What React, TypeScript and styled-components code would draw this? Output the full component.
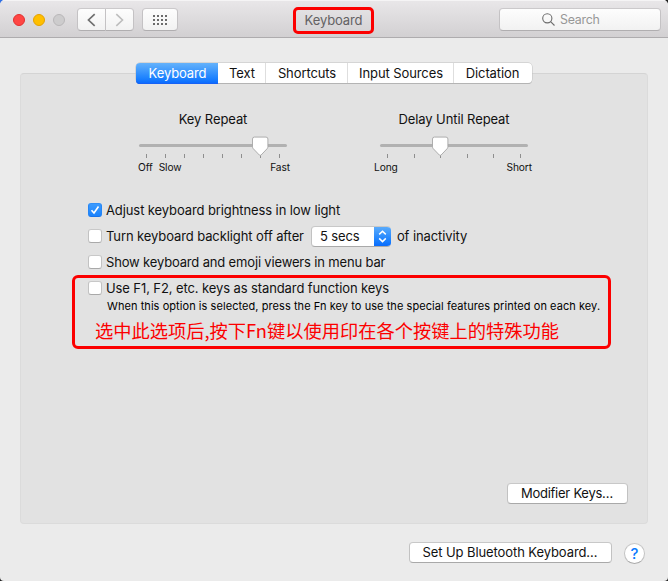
import React from "react";
import styled, { createGlobalStyle, css } from "styled-components";

const Global = createGlobalStyle`
  * { box-sizing: border-box; }
  html, body { margin: 0; padding: 0; }
  body {
    width: 668px;
    height: 581px;
    overflow: hidden;
    background: linear-gradient(135deg, #2f6fe4 0 40px, #222 40px);
    font-family: Inter, "Noto Sans CJK SC", sans-serif;
    font-size: 13px;
    line-height: 16px;
    color: #111;
    letter-spacing: -0.1px;
  }
  button { font: inherit; letter-spacing: inherit; color: inherit; }
`;

const raised = css`
  border: 1px solid;
  border-color: #c8c8c8 #c2c2c2 #a9a9a9;
  background: #fff;
`;

const Window = styled.main`
  width: 668px;
  height: 581px;
  border-radius: 5px 5px 4px 4px;
  overflow: hidden;
  background: #ebebeb;
`;

const Toolbar = styled.header`
  height: 38px;
  display: grid;
  grid-template-columns: 293px 81px 1fr;
  align-items: start;
  padding: 8px 7px 0 0;
  background: linear-gradient(#e9e7e9, #d2d0d2);
  border-bottom: 1px solid #aeacae;
  box-shadow: inset 0 1px #f5f4f5;
`;

const Controls = styled.div`
  display: flex;
  align-items: center;
  height: 23px;
  padding-left: 13px;
`;

const Light = styled.span<{ $fill: string; $edge: string }>`
  width: 12px;
  height: 12px;
  margin-right: 8px;
  border-radius: 50%;
  background: ${(p) => p.$fill};
  border: 1px solid ${(p) => p.$edge};
`;

const ToolButton = styled.button<{ $width: number; $side?: "left" | "right" }>`
  display: flex;
  align-items: center;
  justify-content: center;
  width: ${(p) => p.$width}px;
  height: 23px;
  padding: 0;
  border: 1px solid;
  border-color: #cbc9cb #c4c2c4 #b0aeb0;
  background: linear-gradient(#fdfdfd, #f2f2f2);
  border-radius: ${(p) =>
    p.$side === "left" ? "4px 0 0 4px" : p.$side === "right" ? "0 4px 4px 0" : "4px"};
  ${(p) => p.$side === "left" && "margin-left: 4px;"}
  ${(p) => p.$side === "right" && "border-left: 0; margin-right: 8px;"}
`;

const TitleMark = styled.h1`
  margin: -1px 0 0;
  width: 81px;
  height: 27px;
  border: 3px solid #fc0000;
  border-radius: 5px;
  display: flex;
  align-items: center;
  justify-content: center;
  padding-bottom: 1px;
  font-size: 13px;
  font-weight: 400;
  color: #636163;
`;

const SearchField = styled.div`
  justify-self: end;
  display: flex;
  align-items: center;
  gap: 5px;
  width: 162px;
  height: 23px;
  padding-left: 42px;
  border: 1px solid;
  border-color: #cbc9cb #c4c2c4 #b0aeb0;
  border-radius: 4px;
  background: linear-gradient(#fdfdfd, #f2f2f2);
  font-size: 12.4px;
  letter-spacing: -0.25px;
  color: #979797;
`;

const Panel = styled.section`
  display: flex;
  flex-direction: column;
  height: 451px;
  margin: 35px 20px 0;
  background: #e2e2e2;
  border: 1px solid #dbdbdb;
  border-top-color: #d4d4d4;
  border-radius: 4px;
`;

const Tabs = styled.nav`
  display: flex;
  align-self: flex-start;
  height: 20px;
  margin: -11px 0 1px 115px;
  border-radius: 4px;
  box-shadow: 0 0 0 0.5px #c0c0c0, 0 1px 0 #a9a9a9;
  background: #fff;
`;

const Tab = styled.button<{ $width: number; $active?: boolean }>`
  width: ${(p) => p.$width}px;
  height: 20px;
  padding: 0 0 0 1px;
  border: 0;
  border-right: 1px solid #dedede;
  background: transparent;
  &:last-child { border-right: 0; padding-right: 2px; }
  ${(p) =>
    p.$active &&
    css`
      height: 21px;
      padding-bottom: 1px;
      color: #fff;
      border-right: 0;
      border-radius: 4px 0 0 4px;
      background: linear-gradient(#64b2fb, #1a80ff 75%, #0867ff);
      box-shadow: inset 0 -1px #1762f5;
    `}
`;

const Sliders = styled.div`
  display: grid;
  grid-template-columns: 148px 148px;
  column-gap: 93px;
  margin: 27px 0 0 118px;
`;

const SliderBox = styled.div`
  display: flex;
  flex-direction: column;
`;

const SliderTitle = styled.div`
  text-align: center;
  white-space: nowrap;
`;

const Track = styled.div`
  position: relative;
  height: 3px;
  margin-top: 17px;
  border-radius: 2px;
  background: #b1b1b1;
`;

const Thumb = styled.svg<{ $x: number }>`
  position: absolute;
  left: ${(p) => p.$x}px;
  top: -8px;
`;

const Ticks = styled.div`
  display: flex;
  justify-content: space-between;
  height: 4px;
  margin: 7px 7px 0;
`;

const Tick = styled.i`
  width: 1px;
  height: 4px;
  background: #8e8e8e;
`;

const Labels = styled.div<{ $left: number; $right: number }>`
  display: flex;
  margin: 2px ${(p) => p.$right}px 0 ${(p) => p.$left}px;
  gap: 6px;
  font-size: 10.2px;
  line-height: 15px;
  & > :last-child { margin-left: auto; }
`;

const Options = styled.div`
  display: flex;
  flex-direction: column;
  margin: 22px 0 0 67px;
`;

const Row = styled.label<{ $tracking?: number }>`
  display: flex;
  align-items: center;
  height: 26px;
  letter-spacing: ${(p) => p.$tracking ?? -0.1}px;
  white-space: nowrap;
`;

const Box = styled.span<{ $checked?: boolean }>`
  display: flex;
  align-items: center;
  justify-content: center;
  width: 14px;
  height: 14px;
  margin-right: 4px;
  border-radius: 3px;
  ${raised}
  ${(p) => p.$checked && "background: linear-gradient(#3c9bfd, #1a82fd); border-color: #2f8ff8 #2585f5 #1873ea;"}
`;

const Popup = styled.span`
  display: flex;
  width: 80px;
  height: 21px;
  margin: 0 6px 0 7px;
  border-radius: 4px;
  overflow: hidden;
  ${raised}
  border-right: 0;
`;

const PopupValue = styled.span`
  flex: 1;
  padding-left: 8px;
  line-height: 19px;
`;

const Stepper = styled.span`
  display: flex;
  align-items: center;
  justify-content: center;
  width: 17px;
  height: 21px;
  margin-top: -1px;
  background: linear-gradient(#5eaefb, #1a80ff 70%, #0768fb);
`;

const Marked = styled.div`
  width: 539px;
  height: 74px;
  margin: 0 0 0 -16px;
  padding-left: 13px;
  border: 3px solid #fc0000;
  border-radius: 6px;
`;

const MarkedRow = styled(Row)`
  margin-top: -3px;
`;

const Hint = styled.p`
  margin: -3px 0 0 19px;
  font-size: 11px;
  line-height: 16px;
  letter-spacing: 0.063px;
  white-space: nowrap;
  color: #000;
`;

const Translation = styled.p`
  margin: 3px 0 0 7px;
  font-family: "Noto Sans CJK SC", sans-serif;
  font-size: 18.25px;
  line-height: 26px;
  letter-spacing: 0;
  white-space: nowrap;
  color: #fc0000;
`;

const PushButton = styled.button<{ $width: number; $tracking: number }>`
  width: ${(p) => p.$width}px;
  height: 21px;
  padding: 0 1px 1px 0;
  border-radius: 4px;
  letter-spacing: ${(p) => p.$tracking}px;
  white-space: nowrap;
  ${raised}
`;

const PanelFooter = styled.div`
  display: flex;
  justify-content: flex-end;
  margin: auto 19px 19px 0;
`;

const Footer = styled.footer`
  display: flex;
  justify-content: flex-end;
  align-items: flex-start;
  gap: 12px;
  padding: 18px 23px 0 0;
`;

const Help = styled.button`
  width: 21px;
  height: 21px;
  margin-top: 1px;
  padding: 0;
  border-radius: 50%;
  font-size: 15px;
  font-weight: 500;
  line-height: 18px;
  ${raised}
  color: #0a7bff;
`;

function Slider(props: {
  title: string;
  ticks: number;
  thumb: number;
  labels: string[];
  left: number;
  right: number;
}) {
  return (
    <SliderBox>
      <SliderTitle>{props.title}</SliderTitle>
      <Track>
        <Thumb $x={props.thumb} width="18" height="21" viewBox="0 0 18 21">
          <path
            d="M3.4 1.1H15Q16.9 1.1 16.9 3V10.8Q16.9 11.8 16.2 12.6L10.1 19Q9.2 19.9 8.3 19L2.2 12.6Q1.5 11.8 1.5 10.8V3Q1.5 1.1 3.4 1.1Z"
            fill="#fff"
            stroke="#a6a6a6"
            strokeWidth="0.9"
          />
        </Thumb>
      </Track>
      <Ticks>
        {Array.from({ length: props.ticks }, (_, i) => (
          <Tick key={i} />
        ))}
      </Ticks>
      <Labels $left={props.left} $right={props.right}>
        {props.labels.map((l) => (
          <span key={l}>{l}</span>
        ))}
      </Labels>
    </SliderBox>
  );
}

export default function App() {
  return (
    <>
      <Global />
      <Window>
        <Toolbar>
          <Controls>
            <Light $fill="#ff4644" $edge="#e2302f" />
            <Light $fill="#ffbf00" $edge="#e5a100" />
            <Light $fill="#cdcccd" $edge="#b9b7b9" />
            <ToolButton $width={29} $side="left" aria-label="Back">
              <svg width="9" height="14" viewBox="0 0 9 14" fill="none" stroke="#6f6f6f" strokeWidth="1.7">
                <path d="M7.7 1.2L1.5 7L7.7 12.8" />
              </svg>
            </ToolButton>
            <ToolButton $width={28} $side="right" aria-label="Forward">
              <svg width="9" height="14" viewBox="0 0 9 14" fill="none" stroke="#bdbdbd" strokeWidth="1.6">
                <path d="M1.3 1.2L7.5 7L1.3 12.8" />
              </svg>
            </ToolButton>
            <ToolButton $width={36} aria-label="Show all">
              <svg width="14" height="10" viewBox="0 0 14 10" fill="#6b6b6b">
                {[0, 4, 8].map((y) =>
                  [0, 4, 8, 12].map((x) => <rect key={`${x}-${y}`} x={x} y={y} width="2" height="2" />)
                )}
              </svg>
            </ToolButton>
          </Controls>
          <TitleMark>Keyboard</TitleMark>
          <SearchField>
            <svg width="13" height="13" viewBox="0 0 13 13" fill="none" stroke="#6c6c6c" strokeWidth="1.1">
              <circle cx="5.3" cy="5.3" r="4.6" />
              <path d="M8.6 8.6L12.5 12.5" />
            </svg>
            <span>Search</span>
          </SearchField>
        </Toolbar>

        <Panel>
          <Tabs>
            <Tab $width={82} $active>Keyboard</Tab>
            <Tab $width={48}>Text</Tab>
            <Tab $width={82}>Shortcuts</Tab>
            <Tab $width={106}>Input Sources</Tab>
            <Tab $width={78}>Dictation</Tab>
          </Tabs>

          <Sliders>
            <Slider title="Key Repeat" ticks={8} thumb={112} labels={["Off", "Slow", "Fast"]} left={-1} right={-3} />
            <Slider title="Delay Until Repeat" ticks={6} thumb={51} labels={["Long", "Short"]} left={-6} right={-4} />
          </Sliders>

          <Options>
            <Row>
              <Box $checked>
                <svg width="10" height="10" viewBox="0 0 10 10" fill="none" stroke="#fff" strokeWidth="1.6">
                  <path d="M1.5 5.2L4 8L8.5 1.5" />
                </svg>
              </Box>
              Adjust keyboard brightness in low light
            </Row>
            <Row>
              <Box />
              Turn keyboard backlight off after
              <Popup>
                <PopupValue>5 secs</PopupValue>
                <Stepper>
                  <svg width="9" height="13" viewBox="0 0 9 13" fill="none" stroke="#fff" strokeWidth="1.5">
                    <path d="M1.2 4.4L4.5 1.2L7.8 4.4M1.2 8.4L4.5 11.6L7.8 8.4" />
                  </svg>
                </Stepper>
              </Popup>
              of inactivity
            </Row>
            <Row $tracking={-0.16}>
              <Box />
              Show keyboard and emoji viewers in menu bar
            </Row>
            <Marked>
              <MarkedRow>
                <Box />
                Use F1, F2, etc. keys as standard function keys
              </MarkedRow>
              <Hint>
                When this option is selected, press the Fn key to use the special features printed on each key.
              </Hint>
              <Translation lang="zh">选中此选项后,按下Fn键以使用印在各个按键上的特殊功能</Translation>
            </Marked>
          </Options>

          <PanelFooter>
            <PushButton $width={121} $tracking={-0.25}>Modifier Keys…</PushButton>
          </PanelFooter>
        </Panel>

        <Footer>
          <PushButton $width={203} $tracking={-0.09}>Set Up Bluetooth Keyboard…</PushButton>
          <Help>?</Help>
        </Footer>
      </Window>
    </>
  );
}
